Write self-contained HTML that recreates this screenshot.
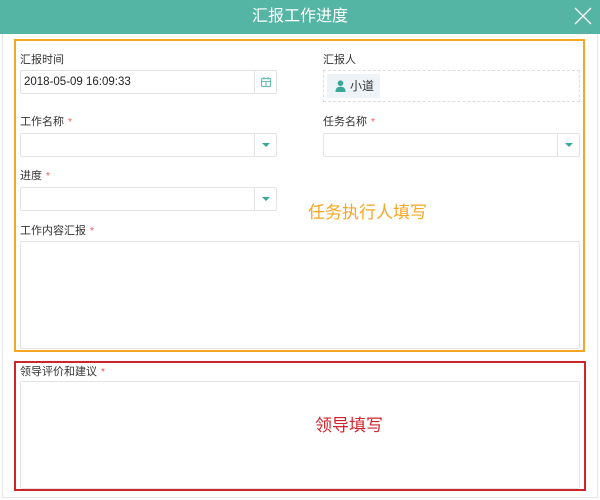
<!DOCTYPE html>
<html><head><meta charset="utf-8"><style>
*{box-sizing:border-box;margin:0;padding:0}
body{width:600px;height:500px;background:#fff;font-family:"Liberation Sans","Noto Sans CJK SC",sans-serif;position:relative;overflow:hidden;color:#333}
.a{position:absolute}
.hdr{left:0;top:0;width:600px;height:34px;background:#55b5a5;color:#fff;font-size:16px;text-align:center;line-height:34px}
.lbl{font-size:11px;color:#333}
.lbl i{color:#e55;font-style:normal;margin-left:4px;font-size:10px}
.in{border:1px solid #e3e3e3;border-radius:2px;background:#fff}
.btn{position:absolute;right:0;top:0;bottom:0;width:22px;border-left:1px solid #e3e3e3}
.tri{position:absolute;left:7px;top:9px;width:0;height:0;border-left:4px solid transparent;border-right:4px solid transparent;border-top:4px solid #3aa896}
</style></head><body>
<div class="a" style="left:2px;top:34px;width:596px;height:464px;border:1px solid #e6e6e6;border-top:none"></div>
<div class="a hdr">汇报工作进度</div>
<svg class="a" style="left:573px;top:6px" width="20" height="20"><path d="M2 2L18 18M18 2L2 18" stroke="#fff" stroke-width="1.3"/></svg>

<div class="a" style="left:14px;top:39px;width:571px;height:313px;border:2px solid #f5a623"></div>
<div class="a" style="left:14px;top:361px;width:572px;height:130px;border:2px solid #d0242b"></div>

<div class="a lbl" style="left:20px;top:51px">汇报时间</div>
<div class="a in" style="left:20px;top:70px;width:257px;height:24px;font-size:11.5px;line-height:22px;padding-left:3px;color:#222">2018-05-09 16:09:33
<div class="btn"><svg style="position:absolute;left:5px;top:5px" width="12" height="12"><rect x="1.5" y="2.5" width="9" height="8" rx="1" fill="none" stroke="#6cc0b0" stroke-width="1.2"/><path d="M1.5 5.5H10.5M6 5.5V10.5M4 1V3.5M8 1V3.5" stroke="#6cc0b0" stroke-width="1.1"/></svg></div></div>

<div class="a lbl" style="left:323px;top:51px">汇报人</div>
<div class="a" style="left:323px;top:70px;width:257px;height:32px;border:1px dashed #ddd"></div>
<div class="a" style="left:327px;top:74px;width:53px;height:24px;background:#eef3f8;font-size:12px;line-height:24px;padding-left:23px">小道</div>
<svg class="a" style="left:335px;top:80px" width="11" height="12"><circle cx="5.5" cy="3.2" r="2.8" fill="#3aa896"/><path d="M0.5 12C0.5 7.5 3 6.8 5.5 6.8S10.5 7.5 10.5 12Z" fill="#3aa896"/></svg>

<div class="a lbl" style="left:20px;top:113px">工作名称<i>*</i></div>
<div class="a in" style="left:20px;top:133px;width:257px;height:24px"><div class="btn"><div class="tri"></div></div></div>
<div class="a lbl" style="left:323px;top:113px">任务名称<i>*</i></div>
<div class="a in" style="left:323px;top:133px;width:257px;height:24px"><div class="btn"><div class="tri"></div></div></div>

<div class="a lbl" style="left:20px;top:167px">进度<i>*</i></div>
<div class="a in" style="left:20px;top:187px;width:257px;height:24px"><div class="btn"><div class="tri"></div></div></div>
<div class="a" style="left:308px;top:198px;font-size:17px;color:#f5a623">任务执行人填写</div>

<div class="a lbl" style="left:20px;top:222px">工作内容汇报<i>*</i></div>
<div class="a in" style="left:20px;top:241px;width:560px;height:108px"></div>

<div class="a lbl" style="left:20px;top:363px">领导评价和建议<i>*</i></div>
<div class="a in" style="left:20px;top:381px;width:560px;height:108px"></div>
<div class="a" style="left:315px;top:411px;font-size:17px;color:#d0242b">领导填写</div>
</body></html>
